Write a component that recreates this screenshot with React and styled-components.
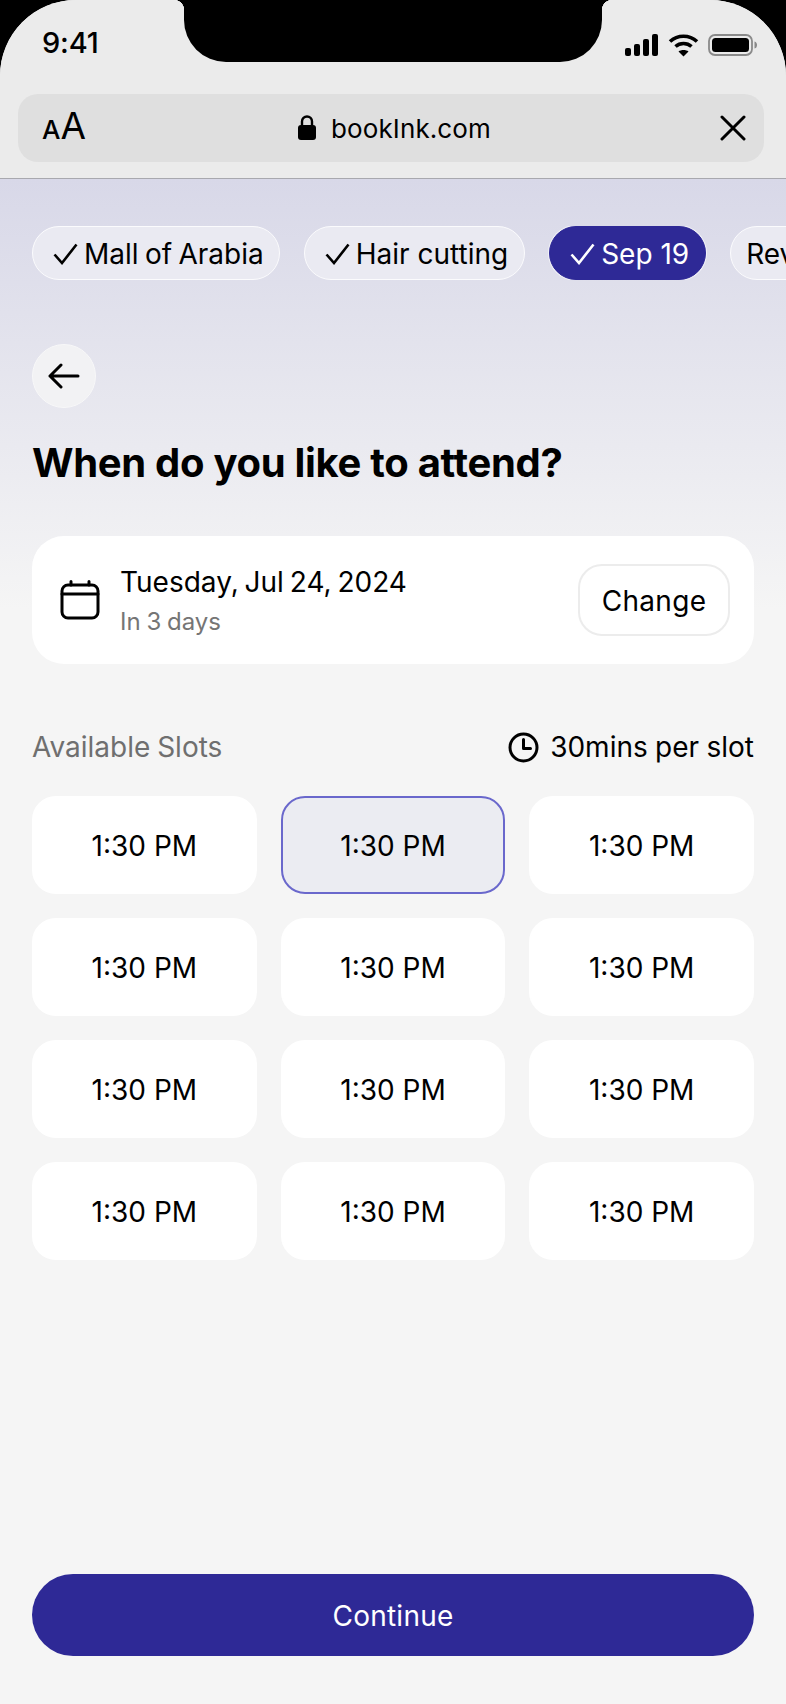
import React from 'react';
import styled, { createGlobalStyle } from 'styled-components';

const GlobalStyle = createGlobalStyle`
  html, body {
    margin: 0;
    padding: 0;
    background: #000;
  }
  * {
    box-sizing: border-box;
  }
`;

const Screen = styled.div`
  position: relative;
  width: 786px;
  height: 1704px;
  overflow: hidden;
  display: flex;
  flex-direction: column;
  border-radius: 76px 76px 0 0;
  background: #f5f5f5;
  color: #000;
  font-family: Inter, 'Liberation Sans', sans-serif;
`;

const Notch = styled.div`
  position: absolute;
  top: 0;
  left: 184px;
  width: 418px;
  height: 62px;
  background: #000;
  border-radius: 0 0 42px 42px;

  &::before,
  &::after {
    content: '';
    position: absolute;
    top: 0;
    width: 10px;
    height: 10px;
  }
  &::before {
    left: -10px;
    background: radial-gradient(circle at 0 100%, transparent 10px, #000 10.5px);
  }
  &::after {
    right: -10px;
    background: radial-gradient(circle at 100% 100%, transparent 10px, #000 10.5px);
  }
`;

const BrowserHeader = styled.header`
  flex: none;
  height: 179px;
  padding: 0 22px 0 18px;
  background: #ebebeb;
  border-bottom: 1px solid #a8a8ae;
`;

const StatusBar = styled.div`
  height: 94px;
  padding: 28px 6px 0 24px;
  display: flex;
  align-items: flex-start;
  justify-content: space-between;
`;

const Clock = styled.span`
  font-size: 29px;
  line-height: 30px;
  font-weight: 500;
  letter-spacing: -0.2px;
`;

const StatusIcons = styled.div`
  display: flex;
  align-items: center;
  gap: 9px;
  padding: 5px 0 0 0;
`;

const UrlBar = styled.div`
  height: 68px;
  width: 746px;
  padding: 0 18px 0 24px;
  border-radius: 20px;
  background: #dfdfdf;
  display: grid;
  grid-template-columns: 1fr auto 1fr;
  align-items: center;
`;

const TextSize = styled.span`
  display: flex;
  align-items: baseline;
  font-weight: 400;
  font-size: 37px;
  line-height: 40px;
`;

const SmallA = styled.span`
  font-size: 26px;
  font-weight: 500;
`;

const Address = styled.div`
  display: flex;
  align-items: center;
  gap: 14px;
  font-size: 26px;
  font-weight: 400;
  letter-spacing: 0.1px;
`;

const CloseIcon = styled.svg`
  justify-self: end;
`;

const Body = styled.main`
  flex: 1;
  display: flex;
  flex-direction: column;
  padding: 47px 32px 48px;
  background: linear-gradient(180deg, #d8d8e8 0, #f5f5f5 430px);
`;

const ChipRow = styled.div`
  display: flex;
  gap: 24px;
  width: 754px;
  overflow: hidden;
  flex: none;
`;

const Chip = styled.div`
  flex: none;
  height: 54px;
  padding: 1px ${p => (p.$tight ? '15px' : '16px')} 0 ${p => (p.$plain ? '15px' : '20px')};
  display: flex;
  align-items: center;
  gap: 6px;
  border-radius: 27px;
  font-size: 28px;
  word-spacing: ${p => (p.$tight ? '-1.5px' : '0')};
  border: 1.5px solid ${p => (p.$active ? '#2e2996' : '#fbfbfd')};
  background: ${p => (p.$active ? '#2e2996' : '#eaeaf2')};
  color: ${p => (p.$active ? '#fff' : '#000')};
  box-shadow: ${p => (p.$active ? '0 0 0 1px #f2f2f8' : 'none')};
`;

const BackButton = styled.button`
  margin-top: 64px;
  width: 64px;
  height: 64px;
  padding: 0;
  flex: none;
  display: flex;
  align-items: center;
  justify-content: center;
  border: 1.5px solid #f8f8f9;
  border-radius: 50%;
  background: #f2f2f4;
`;

const Title = styled.h1`
  margin: 30px 0 0;
  font-size: 40px;
  line-height: 50px;
  font-weight: 700;
  letter-spacing: -0.3px;
`;

const DateCard = styled.section`
  margin-top: 48px;
  height: 128px;
  padding: 0 24px 0 28px;
  display: flex;
  align-items: center;
  border-radius: 32px;
  background: #fff;
`;

const DateText = styled.div`
  flex: 1;
  margin-left: 20px;
  display: flex;
  flex-direction: column;
  gap: 7px;
`;

const DateTitle = styled.div`
  font-size: 28px;
  line-height: 36px;
  word-spacing: -2px;
`;

const DateHint = styled.div`
  font-size: 24px;
  line-height: 30px;
  word-spacing: -1px;
  color: #757575;
`;

const ChangeButton = styled.button`
  width: 152px;
  height: 72px;
  padding: 2px 0 0;
  border: 2px solid #ececec;
  border-radius: 24px;
  background: #fff;
  font: inherit;
  font-size: 28px;
  letter-spacing: 0.3px;
  color: #000;
`;

const SlotsHeader = styled.div`
  margin-top: 64px;
  height: 38px;
  display: flex;
  align-items: center;
  justify-content: space-between;
  font-size: 28px;
`;

const SlotsLabel = styled.span`
  color: #6f6f6f;
  word-spacing: -1px;
`;

const SlotLength = styled.span`
  display: flex;
  align-items: center;
  gap: 11px;
  word-spacing: -0.5px;
`;

const SlotGrid = styled.div`
  margin-top: 30px;
  display: grid;
  grid-template-columns: repeat(3, 1fr);
  grid-auto-rows: 98px;
  gap: 24px;
`;

const Slot = styled.button`
  border: 2px solid ${p => (p.$selected ? '#6a68cc' : '#fff')};
  border-radius: 24px;
  background: ${p => (p.$selected ? '#ebecf2' : '#fff')};
  font: inherit;
  font-size: 28px;
  color: #000;
  padding: 2px 0 0;
`;

const ContinueButton = styled.button`
  margin-top: auto;
  height: 82px;
  flex: none;
  padding: 2px 0 0;
  border: 0;
  border-radius: 41px;
  background: #2e2996;
  color: #fff;
  font: inherit;
  font-size: 28px;
  font-weight: 400;
  letter-spacing: 0.25px;
`;

const CheckIcon = () => (
  <svg width="25" height="22" viewBox="0 0 25 22" fill="none" stroke="currentColor" strokeWidth="2.6">
    <path d="M1.5 11.5 9 20 23.5 1.5" />
  </svg>
);

const chips = [
  { label: 'Mall of Arabia', tight: true },
  { label: 'Hair cutting' },
  { label: 'Sep 19', active: true },
];

const slots = Array.from({ length: 12 }, (_, i) => i);

export default function App() {
  return (
    <>
      <GlobalStyle />
      <Screen>
        <BrowserHeader>
          <StatusBar>
            <Clock>9:41</Clock>
            <StatusIcons>
              <svg width="34" height="22" viewBox="0 0 34 22" fill="#000">
                <rect x="0" y="14" width="6" height="8" rx="2" />
                <rect x="9" y="10" width="6" height="12" rx="2" />
                <rect x="18" y="5" width="6" height="17" rx="2" />
                <rect x="27" y="0" width="6" height="22" rx="2" />
              </svg>
              <svg width="31" height="24" viewBox="0 0 31 24" fill="none" stroke="#000" strokeWidth="3.6">
                <path d="M2 8.5C9.5 1.5 21.5 1.5 29 8.5" />
                <path d="M7.5 13.5C12 9.5 19 9.5 23.5 13.5" />
                <path d="M15.5 23.5 10.5 18.5C13 16.5 18 16.5 20.5 18.5Z" fill="#000" stroke="none" />
              </svg>
              <svg width="50" height="22" viewBox="0 0 50 22" fill="none">
                <rect x="1" y="1" width="43" height="20" rx="6" stroke="#8a8a8a" strokeWidth="1.8" />
                <rect x="4" y="4" width="37" height="14" rx="3.5" fill="#000" />
                <path d="M46.5 7.5c2 .5 2.5 2 2.5 3.5s-.5 3-2.5 3.5z" fill="#8a8a8a" />
              </svg>
            </StatusIcons>
          </StatusBar>
          <UrlBar>
            <TextSize>
              <SmallA>A</SmallA>A
            </TextSize>
            <Address>
              <svg width="20" height="26" viewBox="0 0 20 26" fill="#000">
                <path d="M5 11V6.5a5 5 0 0 1 10 0V11" fill="none" stroke="#000" strokeWidth="2.4" />
                <rect x="1" y="10" width="18" height="15" rx="3" />
              </svg>
              bookInk.com
            </Address>
            <CloseIcon width="26" height="26" viewBox="0 0 26 26" fill="none" stroke="#000" strokeWidth="3" strokeLinecap="round">
              <path d="M2 2 24 24M24 2 2 24" />
            </CloseIcon>
          </UrlBar>
        </BrowserHeader>

        <Body>
          <ChipRow>
            {chips.map(chip => (
              <Chip key={chip.label} $active={chip.active} $tight={chip.tight}>
                <CheckIcon />
                {chip.label}
              </Chip>
            ))}
            <Chip $plain>Review</Chip>
          </ChipRow>

          <BackButton aria-label="Back">
            <svg width="32" height="26" viewBox="0 0 32 26" fill="none" stroke="#000" strokeWidth="3" strokeLinecap="round" strokeLinejoin="round">
              <path d="M30 13H2M13 2 2 13l11 11" />
            </svg>
          </BackButton>

          <Title>When do you like to attend?</Title>

          <DateCard>
            <svg width="40" height="40" viewBox="0 0 40 40" fill="none" stroke="#000" strokeWidth="3" strokeLinecap="round">
              <rect x="2" y="5" width="36" height="33" rx="6" />
              <path d="M2 14H38M11 1.5V5M29 1.5V5" />
            </svg>
            <DateText>
              <DateTitle>Tuesday, Jul 24, 2024</DateTitle>
              <DateHint>In 3 days</DateHint>
            </DateText>
            <ChangeButton>Change</ChangeButton>
          </DateCard>

          <SlotsHeader>
            <SlotsLabel>Available Slots</SlotsLabel>
            <SlotLength>
              <svg width="31" height="31" viewBox="0 0 31 31" fill="none" stroke="#000" strokeWidth="3" strokeLinecap="round" strokeLinejoin="round">
                <circle cx="15.5" cy="15.5" r="13.5" />
                <path d="M15.5 7.5v9h7" />
              </svg>
              30mins per slot
            </SlotLength>
          </SlotsHeader>

          <SlotGrid>
            {slots.map(i => (
              <Slot key={i} $selected={i === 1}>
                1:30 PM
              </Slot>
            ))}
          </SlotGrid>

          <ContinueButton>Continue</ContinueButton>
        </Body>

        <Notch />
      </Screen>
    </>
  );
}
